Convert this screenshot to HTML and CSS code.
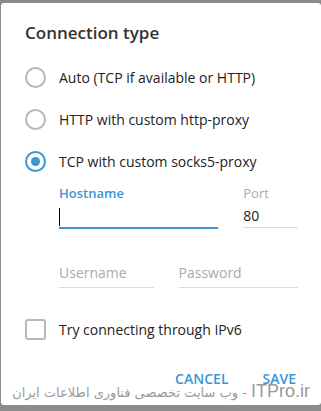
FILE: index.html
```html
<!DOCTYPE html>
<html>
  <head>
    <title>Connection type</title>
    <link rel="stylesheet" href="styles.css">
  </head>
  <body>
    <div class="box">
      <p class="title">Connection type</p>

      <div class="option">
        <span class="radio"></span>
        <span class="label">Auto (TCP if available or HTTP)</span>
      </div>
      <div class="option">
        <span class="radio"></span>
        <span class="label">HTTP with custom http-proxy</span>
      </div>
      <div class="option">
        <span class="radio checked"></span>
        <span class="label">TCP with custom socks5-proxy</span>
      </div>

      <div class="fields">
        <div class="field host">
          <div class="flabel active">Hostname</div>
          <div class="finput focus"><span class="cursor"></span></div>
        </div>
        <div class="field port">
          <div class="flabel">Port</div>
          <div class="finput">80</div>
        </div>
      </div>

      <div class="fields second">
        <div class="field user">
          <div class="finput placeholder">Username</div>
        </div>
        <div class="field pass">
          <div class="finput placeholder">Password</div>
        </div>
      </div>

      <div class="option check-row">
        <span class="check"></span>
        <span class="label">Try connecting through IPv6</span>
      </div>

      <div class="buttons">
        <button class="btn">CANCEL</button>
        <button class="btn">SAVE</button>
      </div>
    </div>
    <div class="watermark"><span class="wm-site">ITPro.ir</span> - وب سایت تخصصی فناوری اطلاعات ایران</div>
  </body>
</html>
```

FILE: styles.css
```css
html, body{
  margin: 0;
  height: 100%;
}

body{
  background-color: #8c8c8c;
  font-family: "Open Sans", "Liberation Sans", sans-serif;
  color: #222;
  overflow: hidden;
  position: relative;
}

.box{
  background-color: white;
  margin: 3px 0 0 1px;
  height: 402px;
  border-radius: 3px;
  padding: 0 23px 0 24px;
  box-sizing: border-box;
}

.title{
  margin: 0;
  padding-top: 19px;
  font-size: 17px;
  line-height: 22px;
  font-weight: 600;
  color: #333;
  margin-bottom: 12px;
}

.option{
  display: flex;
  align-items: center;
  height: 42px;
}

.radio{
  width: 17px;
  height: 17px;
  border: 2px solid #b8b8b8;
  border-radius: 50%;
  position: relative;
  flex-shrink: 0;
}

.radio.checked{
  border-color: #3d95d3;
}

.radio.checked::after{
  content: "";
  position: absolute;
  width: 9px;
  height: 9px;
  border-radius: 50%;
  background-color: #3d95d3;
  top: 4px;
  left: 4px;
}

.label{
  margin-left: 13px;
  font-size: 14px;
  color: #222;
}

.fields{
  display: flex;
  gap: 25px;
  margin-left: 34px;
  margin-top: 2px;
}

.fields.second{
  margin-top: 30px;
}

.flabel{
  font-size: 13px;
  line-height: 18px;
  color: #a8a8a8;
}

.flabel.active{
  color: #3d95d3;
  font-weight: 600;
}

.finput{
  height: 26px;
  font-size: 14px;
  line-height: 24px;
  border-bottom: 1px solid #dcdcdc;
  box-sizing: border-box;
  padding-top: 2px;
}

.finput.focus{
  border-bottom: 2px solid #3d95d3;
  height: 27px;
}

.finput.placeholder{
  height: 29px;
  color: #aaa;
}

.cursor{
  display: inline-block;
  width: 1px;
  height: 18px;
  background-color: #000;
  vertical-align: middle;
}

.host{ width: 160px; }
.port{ width: 55px; }
.user{ width: 95px; }
.pass{ width: 120px; }

.check-row{
  margin-top: 20px;
}

.check{
  width: 17px;
  height: 17px;
  border: 2px solid #b8b8b8;
  border-radius: 3px;
  flex-shrink: 0;
}

.buttons{
  display: flex;
  justify-content: flex-end;
  gap: 34px;
  margin-top: 19px;
  margin-right: 2px;
}

.btn{
  background: transparent;
  border: none;
  padding: 0;
  font-family: "Open Sans", sans-serif;
  font-size: 14px;
  font-weight: 600;
  color: #3d95d3;
  cursor: pointer;
}

.watermark{
  position: absolute;
  right: 11px;
  top: 380px;
  direction: rtl;
  font-family: "DejaVu Sans", sans-serif;
  font-size: 13px;
  line-height: 22px;
  color: #9a9a9a;
  white-space: nowrap;
}

.wm-site{
  font-family: "Liberation Sans", sans-serif;
  font-size: 18px;
}
```
